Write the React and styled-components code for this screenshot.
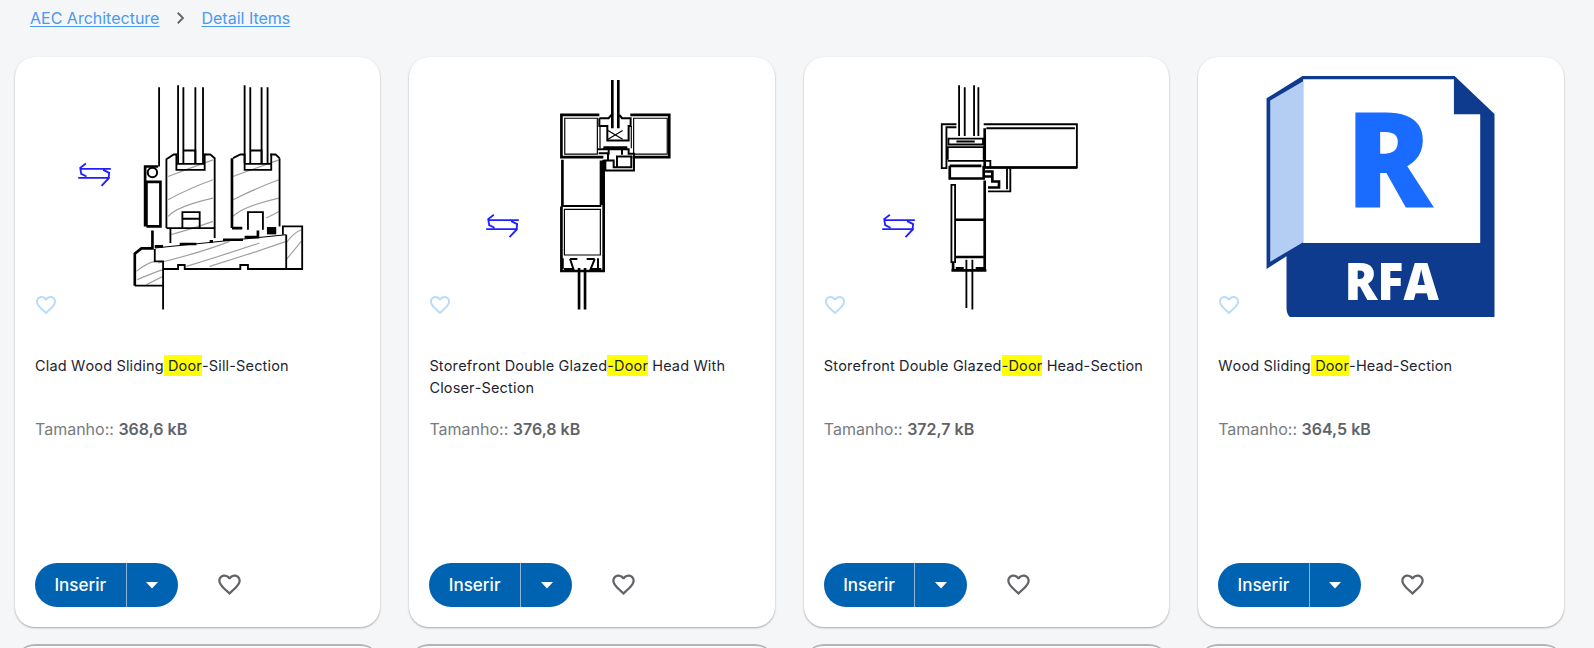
import React from 'react';
import styled, { createGlobalStyle } from 'styled-components';

const Global = createGlobalStyle`
  html, body { margin: 0; padding: 0; height: 648px; overflow: hidden; background: #f5f6f8; font-family: Inter, "Open Sans", sans-serif; }
`;
const Page = styled.div`
  padding: 0 31px 0 15px;
  height: 648px;
  overflow: hidden;
  box-sizing: border-box;
`;
const Crumbs = styled.nav`
  display: flex; align-items: center; height: 57px; padding: 0 0 21px 15px; box-sizing: border-box;
  font-size: 16px; color: #4a9af0;
`;
const CrumbLink = styled.a`
  color: #4a9af0; text-decoration: underline; text-underline-offset: 2px; cursor: pointer;
`;
const Sep = styled.svg`
  width: 18px; height: 18px; margin: 0 12px; color: #5f6368;
`;
const Grid = styled.div`
  display: grid; grid-template-columns: repeat(4, 365.4px); column-gap: 29px; row-gap: 17px;
`;
const Card = styled.article`
  display: flex; flex-direction: column; height: 570px; box-sizing: border-box;
  background: #fff; border-radius: 20px;
  box-shadow: 0 1px 2px rgba(0,0,0,.32), 0 0 1px rgba(0,0,0,.05);
`;
const Thumb = styled.div`
  position: relative; height: 260px; flex: none;
`;
const Drawing = styled.svg`
  display: block; width: 365.4px; height: 259.6px;
`;
const ThumbHeart = styled.svg`
  position: absolute; left: 19px; top: 236px; width: 24px; height: 24px; fill: #b9dcfb;
`;
const Body = styled.div`
  flex: 1; padding: 38px 20px 0;
`;
const Title = styled.h3`
  margin: 0; font-size: 14.5px; letter-spacing: .16px; font-kerning: none; font-weight: 400; line-height: 22px; height: 44px; color: #1d2433;
`;
const Mark = styled.mark`
  background: #ffff00; color: inherit; padding: 2px 0;
`;
const Size = styled.p`
  margin: 19px 0 0; font-size: 16px; line-height: 22px; color: #777b80;
  b { font-weight: 600; color: #5f6368; }
`;
const Footer = styled.div`
  display: flex; align-items: center; padding: 0 20px 20px;
`;
const SplitButton = styled.div`
  display: flex; height: 44px; width: 143px; border-radius: 22px; background: #0063b1; color: #fff; overflow: hidden;
`;
const Main = styled.button`
  width: 91.5px; padding: 0; border: 0; background: none; color: inherit; font: 500 17px Inter, sans-serif; border-right: 1px solid #8eb6d8; box-sizing: border-box;
`;
const Drop = styled.button`
  flex: 1; padding: 0; border: 0; background: none; color: inherit; display: flex; align-items: center; justify-content: center;
`;
const Fav = styled.svg`
  width: 27px; height: 27px; margin: -2px 0 0 38px; fill: #626468;
`;
const Stub = styled.div`
  height: 40px; background: #f8f9fa; border-radius: 20px;
  border-top: 2px solid #b4b4b4;
`;

const heart = "M16.5 3c-1.74 0-3.41.81-4.5 2.09C10.91 3.81 9.24 3 7.5 3 4.42 3 2 5.42 2 8.5c0 3.78 3.4 6.86 8.55 11.54L12 21.35l1.45-1.32C18.6 15.36 22 12.28 22 8.5 22 5.42 19.58 3 16.5 3zm-4.4 15.55l-.1.1-.1-.1C7.14 14.24 4 11.39 4 8.5 4 6.5 5.5 5 7.5 5c1.54 0 3.04.99 3.57 2.36h1.87C13.46 5.99 14.96 5 16.5 5c2 0 3.5 1.5 3.5 3.5 0 2.89-3.14 5.74-7.9 10.05z";

const Arrows = ({ dx, dy }) => (
  <g transform={`translate(${dx} ${dy})`} fill="none" stroke="#2020ff" strokeWidth="5.5">
    <path d="M240 507H333M258 491L241 504L244 522L260 530M235 534H330M310 510L328 519L326 536L305 558" />
  </g>
);

const Hatch = ({ d }) => <path d={d} fill="none" stroke="#a0a0a0" strokeWidth="3.5" />;

const SillDrawing = () => (
  <Drawing viewBox="45 171 1098 780">
    <Arrows dx={0} dy={0} />
    <Hatch d="M505 530Q570 505 640 480M505 600Q570 565 640 540M505 650Q530 620 640 595M512 705Q570 690 640 665M700 530Q770 505 838 480M700 600Q770 565 838 540M700 650Q730 620 838 595M800 655Q820 645 838 635M475 790Q600 760 690 725M560 800Q660 770 780 730M630 800Q760 760 860 725M410 815Q440 790 465 785M412 840Q460 820 490 810M440 855Q470 840 490 830M860 780Q885 750 905 725M860 730Q880 700 905 690" />
    <g fill="none" stroke="#000" strokeWidth="5.5">
      <path d="M478 262V500M535 256V490M551 262V490M587 262V490M610 262V490M735 256V490M752 262V490M786 262V490M804 262V490" />
      <path d="M530 462V510H615V462M530 492H615M553 452H587V490M735 462V510H815V462M735 492H815M752 452H786V490" />
      <path d="M500 685V478L522 464H532M613 464H632L645 475V715M500 685H645M512 685V730M548 685V637H600V685M548 657H600" />
      <path d="M840 475V680M812 464H828L840 475M700 475L722 464H735M745 690V637H790V690" />
      <path d="M850 705V680H908V808H745V796H722V808H555V796H535V808H490M860 705V806M465 748V785H490V930M405 858H490" />
    </g>
    <g fill="none" stroke="#000" strokeWidth="8">
      <path d="M697 685V475M697 685H728M436 680V500H475M440 680H482V546H440V680M458 692V742M405 858V762L425 746H462" />
      <path d="M465 740H490M540 733H590M630 725H640M670 720H730M735 712H775V692" />
    </g>
    <path d="M465 745L860 705" stroke="#000" strokeWidth="3" fill="none" />
    <circle cx="458" cy="518" r="14" fill="#fff" stroke="#000" strokeWidth="6" />
    <rect x="802" y="682" width="28" height="22" fill="#000" />
  </Drawing>
);

const HeadCloserDrawing = () => (
  <Drawing viewBox="0 -9 1098 780">
    <Arrows dx={-3} dy={-26} />
    <g fill="none" stroke="#000" strokeWidth="8">
      <path d="M611 60V205M629 60V205M511 625V750M529 625V750" />
      <path d="M572 165H458V292H584M665 165H782V292H672M461 300V440M458 440V634H585V300" />
    </g>
    <path d="M578 302V436" stroke="#000" strokeWidth="10" />
    <path d="M461 439H578" stroke="#000" strokeWidth="6" />
    <g fill="none" stroke="#000" strokeWidth="3.5">
      <path d="M468 175H566V283H468ZM675 175H776V283H675ZM467 449H575V586H467Z" />
      <path d="M598 212L642 238M642 212L598 238" />
    </g>
    <g fill="none" stroke="#000" strokeWidth="6">
      <path d="M572 175H600L608 165M632 165L640 175H666V198H660V242H596V198H572V175" />
      <path d="M574 198V265M668 198V265" strokeWidth="3.5" />
      <path d="M566 268H660V282H676V332H590V302H615V322H668V290H625V320M584 262H656M600 262V285M640 262V285M570 280H598V302" />
      <path d="M462 596V628M484 598H506M484 598L494 628H466M558 598H534M558 598L546 628H578M568 596V628" />
    </g>
  </Drawing>
);

const HeadDrawing = () => (
  <Drawing viewBox="12 -9 1098 780">
    <Arrows dx={12} dy={-26} />
    <g fill="none" stroke="#000" strokeWidth="5.5">
      <path d="M478 76V228M495 82V228M523 76V228M536 82V228M500 745V600M518 750V600" />
      <path d="M470 193H426V325H440V202H470M560 205H826M552 193H832V323H555" />
      <path d="M446 236H550V254H446ZM470 245H525M444 300V262H552V300M444 303H572V325M632 325V395H565M622 325V388" />
      <path d="M455 610V375H466V610" />
    </g>
    <g fill="none" stroke="#000" strokeWidth="8">
      <path d="M555 205V323M555 323H832M450 318H545M450 318V356H552V318M552 335H578V350M555 350H578V365H598V383H565" />
      <path d="M555 362V634M466 480H555M466 592H555M455 632H560M460 605V628M492 626H468M528 626H556" />
    </g>
  </Drawing>
);

const RLetter = styled.text.attrs({ x: 467, y: 445, textLength: 261, lengthAdjust: 'spacingAndGlyphs', children: 'R' })`
  font: 800 399px "Open Sans", sans-serif; fill: #1a6bff;
`;
const RfaLetters = styled.text.attrs({ x: 464, y: 721, textLength: 284, lengthAdjust: 'spacingAndGlyphs', children: 'RFA' })`
  font: 800 154px "Open Sans", sans-serif; fill: #fff;
`;
const RfaLogo = () => (
  <Drawing viewBox="24 -9 1098 780">
    <path d="M338 48H795L915 162V778H322Q290 778 290 745V590L230 628V115Z" fill="#0e3b8e" />
    <path d="M340 58H793V163H872V550H340Z" fill="#fff" />
    <path d="M241 122L340 64V548L241 606Z" fill="#b3cdf3" />
    <RLetter />
    <RfaLetters />
  </Drawing>
);

const items = [
  { art: <SillDrawing />, pre: 'Clad Wood Sliding', hit: ' Door', post: '-Sill-Section', size: '368,6 kB' },
  { art: <HeadCloserDrawing />, pre: 'Storefront Double Glazed', hit: '-Door', post: ' Head With Closer-Section', size: '376,8 kB' },
  { art: <HeadDrawing />, pre: 'Storefront Double Glazed', hit: '-Door', post: ' Head-Section', size: '372,7 kB' },
  { art: <RfaLogo />, pre: 'Wood Sliding', hit: ' Door', post: '-Head-Section', size: '364,5 kB' },
];

export default function App() {
  return (
    <Page>
      <Global />
      <Crumbs>
        <CrumbLink>AEC Architecture</CrumbLink>
        <Sep viewBox="0 0 24 24" fill="none" stroke="currentColor" strokeWidth="2.4"><path d="M9 5l7 7-7 7" /></Sep>
        <CrumbLink>Detail Items</CrumbLink>
      </Crumbs>
      <Grid>
        {items.map((it, i) => (
          <Card key={i}>
            <Thumb>
              {it.art}
              <ThumbHeart viewBox="0 0 24 24"><path d={heart} /></ThumbHeart>
            </Thumb>
            <Body>
              <Title>{it.pre}<Mark>{it.hit}</Mark>{it.post}</Title>
              <Size>Tamanho:: <b>{it.size}</b></Size>
            </Body>
            <Footer>
              <SplitButton>
                <Main>Inserir</Main>
                <Drop aria-label="Mais opções">
                  <svg width="12" height="7" viewBox="0 0 12 7"><path d="M0 0H12L6 6.5Z" fill="#fff" /></svg>
                </Drop>
              </SplitButton>
              <Fav viewBox="0 0 24 24"><path d={heart} /></Fav>
            </Footer>
          </Card>
        ))}
        {items.map((_, i) => <Stub key={i} />)}
      </Grid>
    </Page>
  );
}
